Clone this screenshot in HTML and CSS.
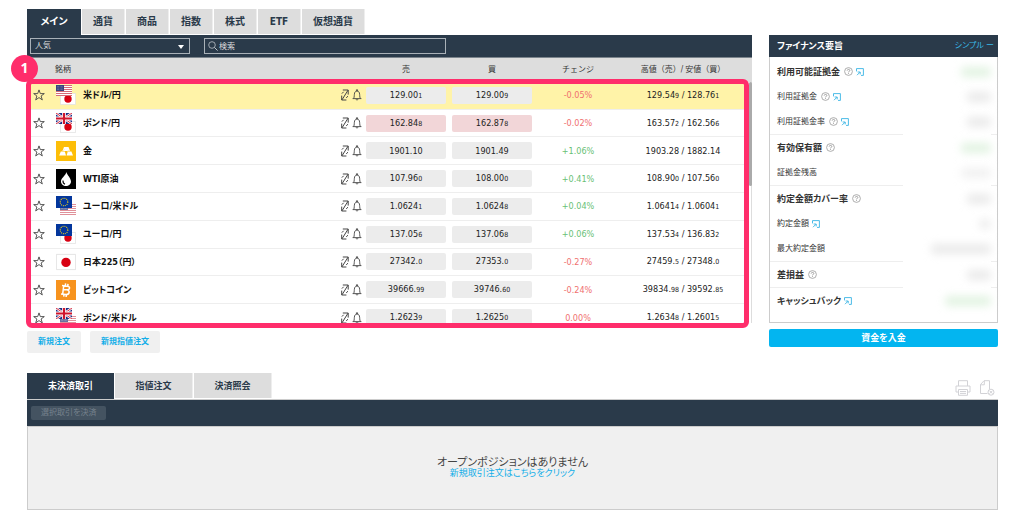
FILE: index.html
```html
<!DOCTYPE html>
<html lang="ja">
<head>
<meta charset="utf-8">
<title>取引プラットフォーム</title>
<link rel="stylesheet" href="styles.css">
</head>
<body>
<svg class="defs" aria-hidden="true">
  <symbol id="star" viewBox="0 0 12 12"><path d="M6 .9 7.3 4.6H11.3L8.1 7 9.3 10.9 6 8.6 2.7 10.9 3.9 7 .7 4.6H4.7Z" fill="none" stroke="#444" stroke-width=".9"/></symbol>
  <symbol id="pop" viewBox="0 0 8 12"><path d="M1.8 1H7.2V5.6M7 1.2 1 10.8M.7 6.6V11H5.4M.9 4.6 2.6 2.8M5.2 8.8 7 7.2" fill="none" stroke="#444"/></symbol>
  <symbol id="bell" viewBox="0 0 10 12"><path d="M.6 9.6H9.4M1.7 9.4C2.5 8 2.1 5.5 2.6 4 3 2.6 3.8 2.2 5 2.2S7 2.6 7.4 4C7.9 5.5 7.5 8 8.3 9.4M4.4 2V.8H5.6V2M4 10.2C4.2 11.3 5.8 11.3 6 10.2" fill="none" stroke="#444" stroke-width=".9"/></symbol>
  <symbol id="us" viewBox="0 0 16 11"><path fill="#fff" d="M0 0H16V11H0Z"/><path d="M0 .5H16M0 2.5H16M0 4.5H16M0 6.5H16M0 8.5H16M0 10.5H16" stroke="#d66b78"/><path fill="#38437f" d="M0 0H8V6H0Z"/><path d="M1 1.5H7M1 3H7M1 4.5H7" stroke="#aab0d0" stroke-width=".5" stroke-dasharray=".6 .8"/></symbol>
  <symbol id="gb" viewBox="0 0 16 11"><path fill="#1b2f86" d="M0 0H16V11H0Z"/><path d="M0 0 16 11M16 0 0 11" stroke="#fff" stroke-width="2.4"/><path d="M0 0 16 11M16 0 0 11" stroke="#d0142c" stroke-width=".9"/><path d="M8 0V11M0 5.5H16" stroke="#fff" stroke-width="3.8"/><path d="M8 0V11M0 5.5H16" stroke="#d0142c" stroke-width="2.2"/></symbol>
  <symbol id="eu" viewBox="0 0 16 12"><path fill="#03369c" d="M0 0H16V12H0Z"/><circle cx="8" cy="6" r="3.8" fill="none" stroke="#f5d313" stroke-width="1.1" stroke-dasharray="1 .99"/></symbol>
  <symbol id="jp" viewBox="0 0 16 12"><path fill="#fff" stroke="#ddd" stroke-width=".7" d="M.4 .4H15.6V11.6H.4Z"/><circle cx="8" cy="6" r="3.7" fill="#d80012"/></symbol>
  <symbol id="usdjpy" viewBox="0 0 20 20"><use href="#jp" x="4" y="8" width="16" height="12"/><use href="#us" width="16" height="11"/></symbol>
  <symbol id="gbpjpy" viewBox="0 0 20 20"><use href="#jp" x="4" y="8" width="16" height="12"/><use href="#gb" width="16" height="11"/></symbol>
  <symbol id="gbpusd" viewBox="0 0 20 20"><use href="#us" x="4" y="8" width="16" height="11" opacity=".75"/><use href="#gb" width="16" height="11"/></symbol>
  <symbol id="eurusd" viewBox="0 0 20 20"><use href="#us" x="4" y="8" width="16" height="11" opacity=".75"/><use href="#eu" width="16" height="12"/></symbol>
  <symbol id="eurjpy" viewBox="0 0 20 20"><use href="#jp" x="4" y="8" width="16" height="12"/><use href="#eu" width="16" height="12"/></symbol>
  <symbol id="gold" viewBox="0 0 20 20"><path fill="#fdbe08" d="M0 0H20V20H0Z"/><path fill="#fff" d="M8 6H12.5L14 10H6.5ZM4.8 10.6H8.8L10 14.5H3.2ZM11.8 10.6H15.4L17 14.5H10.6Z"/><path d="M8.5 8.5 6 10.4M11 10.5 14 9" stroke="#fde39a" stroke-width=".7"/></symbol>
  <symbol id="oil" viewBox="0 0 20 20"><path d="M0 0H20V20H0Z"/><path fill="#fff" d="M10.4 3C11 6 15 9 15 12.5 15 15.2 12.8 17 10 17S5 15.2 5 12.5C5 9 9.4 7 10.4 3Z"/><path d="M7 11.5C6.8 13.5 7.5 14.6 9 15.2" fill="none" stroke="#000" stroke-width="1.1"/></symbol>
  <symbol id="nikkei" viewBox="0 0 20 20"><path fill="#fff" stroke="#ddd" stroke-width=".8" d="M.4 2.4H19.6V17.6H.4Z"/><circle cx="10" cy="10.4" r="4.7" fill="#d80012"/></symbol>
  <symbol id="btc" viewBox="0 0 20 20"><path fill="#f7931e" d="M0 0H20V20H0Z"/><path d="M7.8 5.2 6.6 14.6M6 5.6 11.4 6.2C14.8 6.6 14 10 10.9 9.8L7.6 9.5M10.9 9.8C14.4 10.4 13.6 14.8 10 14.6L5 14.1M9.6 3.4 9.3 5.8M12 3.8 11.7 6.1M8 14.5 7.7 16.6M10.4 14.6 10.1 17" fill="none" stroke="#fff" stroke-width="1.5"/></symbol>
  <symbol id="help" viewBox="0 0 9 9"><circle cx="4.5" cy="4.5" r="3.9" fill="none" stroke="#999" stroke-width=".8"/><path d="M3.2 3.6C3.2 2 5.8 2 5.8 3.5 5.8 4.4 4.5 4.3 4.5 5.4M4.5 6.1V6.9" fill="none" stroke="#888" stroke-width=".8"/></symbol>
  <symbol id="open" viewBox="0 0 8 8"><path d="M.5 3.4V.6H7.4V7.4H5M1 7.2 4 4.2M1.6 4H4.2V6.4" fill="none" stroke="#38b4e4" stroke-width=".9"/></symbol>
</svg>

<main class="page">
  <div class="top">
    <section class="market">
      <nav class="tabs">
        <button class="tab main active">メイン</button><button class="tab">通貨</button><button class="tab">商品</button><button class="tab">指数</button><button class="tab">株式</button><button class="tab">ETF</button><button class="tab wide">仮想通貨</button>
      </nav>
      <div class="filters">
        <div class="pick"><select aria-label="カテゴリー"><option>人気</option></select></div>
        <label class="search">
          <svg width="10" height="10" viewBox="0 0 10 10"><circle cx="4" cy="4" r="3.3" fill="none" stroke="#bcc3c9" stroke-width=".8"/><path d="M6.4 6.4 9.6 9.6" stroke="#bcc3c9"/></svg>
          <input type="text" placeholder="検索" aria-label="検索">
        </label>
      </div>
      <div class="watch">
        <div class="scroller">
          <table>
            <colgroup><col class="c-star"><col class="c-flag"><col><col class="c-tools"><col class="c-price"><col class="c-price"><col class="c-price"><col class="c-range"></colgroup>
            <thead><tr><th></th><th colspan="3" class="left">銘柄</th><th>売</th><th>買</th><th>チェンジ</th><th>高値（売）/ 安値（買）</th></tr></thead>
            <tbody>
              <tr class="selected"><td><svg class="star"><use href="#star"/></svg></td><td><svg class="flag"><use href="#usdjpy"/></svg></td><td class="name">米ドル/円</td><td class="tools"><svg class="pop"><use href="#pop"/></svg><svg class="bell"><use href="#bell"/></svg></td><td><button class="price">129.00<small>1</small></button></td><td><button class="price">129.00<small>9</small></button></td><td class="down">-0.05%</td><td>129.54<small>9</small> / 128.76<small>1</small></td></tr>
              <tr><td><svg class="star"><use href="#star"/></svg></td><td><svg class="flag"><use href="#gbpjpy"/></svg></td><td class="name">ポンド/円</td><td class="tools"><svg class="pop"><use href="#pop"/></svg><svg class="bell"><use href="#bell"/></svg></td><td><button class="price fall">162.84<small>8</small></button></td><td><button class="price fall">162.87<small>8</small></button></td><td class="down">-0.02%</td><td>163.57<small>2</small> / 162.56<small>6</small></td></tr>
              <tr><td><svg class="star"><use href="#star"/></svg></td><td><svg class="flag"><use href="#gold"/></svg></td><td class="name">金</td><td class="tools"><svg class="pop"><use href="#pop"/></svg><svg class="bell"><use href="#bell"/></svg></td><td><button class="price">1901.10</button></td><td><button class="price">1901.49</button></td><td class="up">+1.06%</td><td>1903.28 / 1882.14</td></tr>
              <tr><td><svg class="star"><use href="#star"/></svg></td><td><svg class="flag"><use href="#oil"/></svg></td><td class="name">WTI原油</td><td class="tools"><svg class="pop"><use href="#pop"/></svg><svg class="bell"><use href="#bell"/></svg></td><td><button class="price">107.96<small>0</small></button></td><td><button class="price">108.00<small>0</small></button></td><td class="up">+0.41%</td><td>108.90<small>0</small> / 107.56<small>0</small></td></tr>
              <tr><td><svg class="star"><use href="#star"/></svg></td><td><svg class="flag"><use href="#eurusd"/></svg></td><td class="name">ユーロ/米ドル</td><td class="tools"><svg class="pop"><use href="#pop"/></svg><svg class="bell"><use href="#bell"/></svg></td><td><button class="price">1.0624<small>1</small></button></td><td><button class="price">1.0624<small>8</small></button></td><td class="up">+0.04%</td><td>1.0641<small>4</small> / 1.0604<small>1</small></td></tr>
              <tr><td><svg class="star"><use href="#star"/></svg></td><td><svg class="flag"><use href="#eurjpy"/></svg></td><td class="name">ユーロ/円</td><td class="tools"><svg class="pop"><use href="#pop"/></svg><svg class="bell"><use href="#bell"/></svg></td><td><button class="price">137.05<small>6</small></button></td><td><button class="price">137.06<small>8</small></button></td><td class="up">+0.06%</td><td>137.53<small>4</small> / 136.83<small>2</small></td></tr>
              <tr><td><svg class="star"><use href="#star"/></svg></td><td><svg class="flag"><use href="#nikkei"/></svg></td><td class="name">日本225（円）</td><td class="tools"><svg class="pop"><use href="#pop"/></svg><svg class="bell"><use href="#bell"/></svg></td><td><button class="price">27342.<small>0</small></button></td><td><button class="price">27353.<small>0</small></button></td><td class="down">-0.27%</td><td>27459.<small>5</small> / 27348.<small>0</small></td></tr>
              <tr><td><svg class="star"><use href="#star"/></svg></td><td><svg class="flag"><use href="#btc"/></svg></td><td class="name">ビットコイン</td><td class="tools"><svg class="pop"><use href="#pop"/></svg><svg class="bell"><use href="#bell"/></svg></td><td><button class="price">39666.<small>99</small></button></td><td><button class="price">39746.<small>60</small></button></td><td class="down">-0.24%</td><td>39834.<small>98</small> / 39592.<small>85</small></td></tr>
              <tr><td><svg class="star"><use href="#star"/></svg></td><td><svg class="flag"><use href="#gbpusd"/></svg></td><td class="name">ポンド/米ドル</td><td class="tools"><svg class="pop"><use href="#pop"/></svg><svg class="bell"><use href="#bell"/></svg></td><td><button class="price">1.2623<small>9</small></button></td><td><button class="price">1.2625<small>0</small></button></td><td class="down">0.00%</td><td>1.2634<small>8</small> / 1.2601<small>5</small></td></tr>
            </tbody>
          </table>
        </div>
        <div class="thumb"></div>
        <div class="callout"></div>
        <div class="step">1</div>
      </div>
      <div class="orders"><button>新規注文</button><button>新規指値注文</button></div>
    </section>

    <aside class="finance">
      <header><h2>ファイナンス要旨</h2><a href="#">シンプル ー</a></header>
      <div class="summary">
        <div class="group">
          <div class="row strong"><span>利用可能証拠金</span><svg class="help"><use href="#help"/></svg><svg class="open"><use href="#open"/></svg><i class="mask green"></i></div>
          <div class="row"><span>利用証拠金</span><svg class="help"><use href="#help"/></svg><svg class="open"><use href="#open"/></svg><i class="mask short"></i></div>
          <div class="row"><span>利用証拠金率</span><svg class="help"><use href="#help"/></svg><svg class="open"><use href="#open"/></svg><i class="mask short"></i></div>
        </div>
        <div class="group">
          <div class="row strong"><span>有効保有額</span><svg class="help"><use href="#help"/></svg><i class="mask green"></i></div>
          <div class="row"><span>証拠金残高</span><i class="mask faint"></i></div>
        </div>
        <div class="group">
          <div class="row strong"><span>約定金額カバー率</span><svg class="help"><use href="#help"/></svg><i class="mask short"></i></div>
          <div class="row"><span>約定金額</span><svg class="open"><use href="#open"/></svg><i class="mask tiny"></i></div>
          <div class="row"><span>最大約定金額</span><i class="mask long"></i></div>
        </div>
        <div class="group">
          <div class="row strong"><span>差損益</span><svg class="help"><use href="#help"/></svg><i class="mask short"></i></div>
        </div>
        <div class="group">
          <div class="row strong"><span>キャッシュバック</span><svg class="open"><use href="#open"/></svg><i class="mask green wide"></i></div>
        </div>
      </div>
      <button class="deposit">資金を入金</button>
    </aside>
  </div>

  <section class="positions">
    <div class="bar">
      <nav class="tabs"><button class="tab active">未決済取引</button><button class="tab">指値注文</button><button class="tab">決済照会</button></nav>
      <div class="actions">
        <svg width="16" height="16" viewBox="0 0 16 16" fill="none" stroke="#d2d2d6"><path d="M3.5 6V.7H12.5V6M3.5 12H1V6H15V12H12.5M3.5 9.5H12.5V15.3H3.5ZM5 11.5H11M5 13.4H11"/></svg>
        <svg width="16" height="16" viewBox="0 0 16 16" fill="none" stroke="#d2d2d6"><path d="M8.5 13.5H1.5V4.5L5 .7H10.5V9M1.5 4.8H5.3V1"/><circle cx="12" cy="12.2" r="3"/><path d="M10.5 10.7 13.5 13.7M13.5 10.7 10.5 13.7"/></svg>
      </div>
    </div>
    <div class="strip"><button disabled>選択取引を決済</button></div>
    <div class="empty"><p>オープンポジションはありません</p><a href="#">新規取引注文はこちらをクリック</a></div>
  </section>
</main>
</body>
</html>
```
FILE: styles.css
```css
* { box-sizing: border-box; }
body {
  margin: 0;
  background: #fff;
  color: #222;
  font: 9px/12px "DejaVu Sans Condensed", "Noto Sans CJK JP", sans-serif;
  font-feature-settings: "palt";
}
button, input, select { font: inherit; font-feature-settings: inherit; color: inherit; border: 0; margin: 0; padding: 0; }
button { cursor: pointer; }
a { color: #13aee8; text-decoration: none; }
h2, p { margin: 0; font-size: inherit; }
svg { display: block; flex: none; }
.defs { position: absolute; width: 0; height: 0; }

.page { padding: 9px 26px 20px 27px; }
.top { display: flex; gap: 17px; align-items: flex-start; }
.market { flex: 725 1 0; min-width: 0; }
.finance { flex: 229 1 0; min-width: 0; padding-top: 26px; }

.tabs { display: flex; gap: 1px; align-items: flex-start; }
.tab {
  height: 25px;
  min-width: 43px;
  padding: 0 10px;
  background: #ddd;
  border-right: 1px solid #eee;
  color: #2a3a4a;
  font-size: 10px;
  font-weight: bold;
}
.tab.active { height: 26px; background: #2a3a4a; border: 0; color: #fff; }
.tab.main { min-width: 54px; }
.tab.wide { min-width: 63px; }

.filters {
  display: flex;
  gap: 14px;
  height: 23px;
  padding: 3px;
  background: #2a3a4a;
  border-bottom: 1px solid #7b848c;
  color: #ddd;
  font-size: 8px;
}
.pick { position: relative; flex: 160 1 0; max-width: 160px; display: flex; border: 1px solid #a9b1b8; }
.pick::after {
  content: "";
  position: absolute;
  right: 5px;
  top: 6px;
  border: 3px solid transparent;
  border-top: 4px solid #fff;
  border-bottom: 0;
}
.pick select { appearance: none; width: 100%; padding-left: 4px; background: none; }
.search { flex: 242 1 0; max-width: 242px; display: flex; align-items: center; gap: 1px; padding-left: 3px; border: 1px solid #a9b1b8; }
.search input { width: 100%; min-width: 0; height: 100%; background: none; outline: 0; }
.search input::placeholder { color: #ddd; opacity: 1; }

.watch { position: relative; }
.scroller { height: 265px; overflow: hidden; padding-right: 6px; border-right: 1px solid #ddd; background: linear-gradient(#ddd 24px, #fff 24px); }
table { width: 100%; height: 274px; table-layout: fixed; border-collapse: collapse; text-align: center; }
.c-star, .c-flag { width: 28px; }
.c-tools { width: 23px; }
.c-price { width: 86px; }
.c-range { width: 124px; }
th { height: 24px; padding: 0; background: #ddd; font-size: 8px; font-weight: normal; font-feature-settings: normal; color: #333; white-space: nowrap; }
th.left { text-align: left; }
td { padding: 0; border-bottom: 1px solid #eee; }
.selected { background: #fff3a8; }
td.name { font-weight: bold; text-align: left; color: #111; }
td.down { color: #f07070; }
td.up { color: #6abf76; }
small { font-size: 7px; }
.star { width: 12px; height: 12px; margin-left: 6px; }
.flag { width: 20px; height: 20px; margin-left: 1px; }
.pop { width: 8px; height: 12px; }
.bell { width: 10px; height: 12px; margin-left: 3px; }
.pop, .bell { display: inline-block; vertical-align: middle; }
td.tools { font-size: 0; }
.price { display: block; width: calc(100% - 6px); height: 17px; margin: 0 3px; background: #ececec; border-radius: 2px; }
.price.fall { background: #f2d6d8; }

.thumb { position: absolute; top: 24px; right: 0; width: 3px; height: 104px; border-radius: 2px; background: #aaa; }
.callout { position: absolute; top: 21px; left: -1px; right: 3px; bottom: -5px; border: 5px solid #ff2d6b; border-radius: 6px; }
.step {
  position: absolute;
  top: -3px;
  left: -16px;
  width: 27px;
  height: 27px;
  border-radius: 50%;
  background: #ff2d6b;
  color: #fff;
  font: bold 14px/26px "Open Sans", sans-serif;
  text-align: center;
}

.orders { display: flex; gap: 9px; padding-top: 8px; }
.orders button { height: 22px; padding: 0 11px; border-radius: 2px; background: #f0f0f0; color: #13aee8; font-size: 8px; font-weight: bold; }

.finance header { display: flex; justify-content: space-between; align-items: center; height: 22px; padding: 0 4px 0 8px; background: #2a3a4a; color: #fff; }
.finance header a { color: #39b9e8; font-size: 8px; }
.summary { padding: 2px 0 9px; border: 1px solid #ccc; border-width: 0 1px 1px; }
.group + .group { padding-top: 1px; background: linear-gradient(90deg, #eee calc(100% - 94px), #fff 0, #fff calc(100% - 6px), #eee 0) top / 100% 1px no-repeat; }
.row { display: flex; align-items: center; height: 25px; padding: 0 6px 0 7px; font-size: 8px; color: #333; }
.row.strong { font-size: 9px; font-weight: bold; }
.help { width: 9px; height: 9px; margin-left: 4px; }
.open { width: 8px; height: 8px; margin-left: 3px; }
.mask { width: 30px; height: 10px; margin-left: auto; border-radius: 4px; background: #eaeaea; filter: blur(4px); }
.mask.short { width: 24px; }
.mask.faint { background: #f1f1f1; }
.mask.tiny { width: 12px; background: #eee; }
.mask.long { width: 60px; }
.mask.green { background: #e2f3e2; }
.mask.wide { width: 46px; }
.deposit { display: block; width: 100%; height: 18px; margin-top: 6px; border-radius: 2px; background: #03b5f0; color: #fff; font-weight: bold; }

.positions { padding-top: 20px; }
.bar { display: flex; justify-content: space-between; }
.positions .tab { min-width: 78px; font-size: 9px; }
.positions .tab.active { min-width: 87px; }
.actions { display: flex; gap: 8px; align-items: center; padding: 3px 3px 0 0; }
.strip { height: 27px; padding: 6px 4px; background: #2a3a4a; border-top: 1px solid #ccc; }
.strip button { display: block; height: 14px; padding: 0 10px; border-radius: 2px; background: #445361; color: #75818c; font-size: 8px; line-height: 14px; }
.empty { height: 84px; padding-top: 31px; background: #f0f0f0; border: 1px solid #ccc; text-align: center; line-height: 10px; }
.empty p { font-size: 11px; color: #444; }
.empty a { display: block; }
```
